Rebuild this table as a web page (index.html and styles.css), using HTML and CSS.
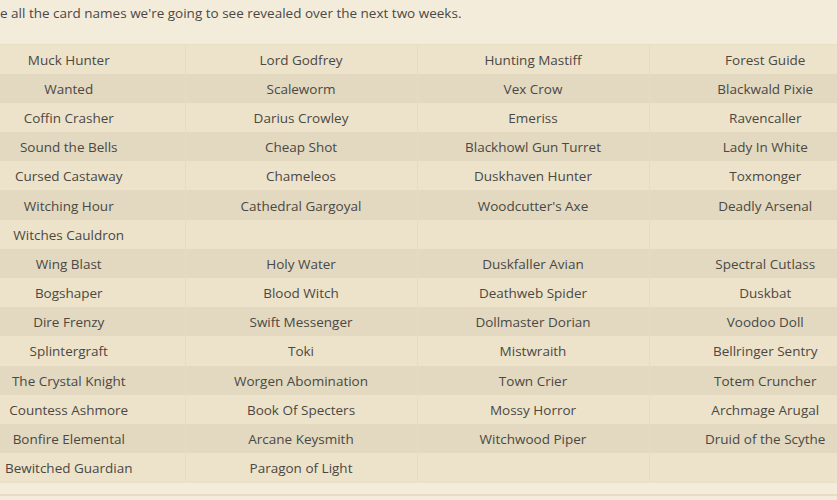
FILE: index.html
```html
<!DOCTYPE html>
<html>
<head>
<meta charset="utf-8">
<link rel="stylesheet" href="styles.css">
</head>
<body>
<div class="page">
  <p class="intro">e all the card names we're going to see revealed over the next two weeks.</p>
  <div class="wrap">
    <table class="cards">
      <tr><td>Muck Hunter</td><td>Lord Godfrey</td><td>Hunting Mastiff</td><td>Forest Guide</td></tr>
      <tr><td>Wanted</td><td>Scaleworm</td><td>Vex Crow</td><td>Blackwald Pixie</td></tr>
      <tr><td>Coffin Crasher</td><td>Darius Crowley</td><td>Emeriss</td><td>Ravencaller</td></tr>
      <tr><td>Sound the Bells</td><td>Cheap Shot</td><td>Blackhowl Gun Turret</td><td>Lady In White</td></tr>
      <tr><td>Cursed Castaway</td><td>Chameleos</td><td>Duskhaven Hunter</td><td>Toxmonger</td></tr>
      <tr><td>Witching Hour</td><td>Cathedral Gargoyal</td><td>Woodcutter's Axe</td><td>Deadly Arsenal</td></tr>
      <tr><td>Witches Cauldron</td><td></td><td></td><td></td></tr>
      <tr><td>Wing Blast</td><td>Holy Water</td><td>Duskfaller Avian</td><td>Spectral Cutlass</td></tr>
      <tr><td>Bogshaper</td><td>Blood Witch</td><td>Deathweb Spider</td><td>Duskbat</td></tr>
      <tr><td>Dire Frenzy</td><td>Swift Messenger</td><td>Dollmaster Dorian</td><td>Voodoo Doll</td></tr>
      <tr><td>Splintergraft</td><td>Toki</td><td>Mistwraith</td><td>Bellringer Sentry</td></tr>
      <tr><td>The Crystal Knight</td><td>Worgen Abomination</td><td>Town Crier</td><td>Totem Cruncher</td></tr>
      <tr><td>Countess Ashmore</td><td>Book Of Specters</td><td>Mossy Horror</td><td>Archmage Arugal</td></tr>
      <tr><td>Bonfire Elemental</td><td>Arcane Keysmith</td><td>Witchwood Piper</td><td>Druid of the Scythe</td></tr>
      <tr><td>Bewitched Guardian</td><td>Paragon of Light</td><td></td><td></td></tr>
    </table>
  </div>
  <div class="rule"></div>
</div>
</body>
</html>
```

FILE: styles.css
```css
html, body {
  margin: 0;
  padding: 0;
  background: #f4ecdb;
  overflow: hidden;
  width: 837px;
  height: 500px;
}
.page {
  font-family: "Open Sans", "Noto Sans", sans-serif;
  font-size: 13.5px;
  color: #4b4844;
}
.intro {
  margin: 0;
  height: 44px;
  line-height: 26px;
}
.wrap {
  margin-left: -47px;
  width: 930px;
}
.cards {
  border-collapse: collapse;
  table-layout: fixed;
  width: 928px;
  border-top: 1px solid #e9dfc6;
}
.cards td {
  width: 232px;
  height: 29.2px;
  padding: 1px 6px 0;
  box-sizing: border-box;
  text-align: center;
  line-height: 20px;
  border-left: 1px solid #e8dcbc;
  white-space: nowrap;
}
.cards td:first-child {
  border-left: none;
}
.cards tr:nth-child(odd) td {
  background: #ede3ca;
}
.cards tr:nth-child(even) td {
  background: #e2d9c0;
}
.cards tr:last-child td {
  border-bottom: 2px solid #ebe1c8;
}
.rule {
  margin-top: 11px;
  height: 2px;
  background: #e6dcc3;
}
```
